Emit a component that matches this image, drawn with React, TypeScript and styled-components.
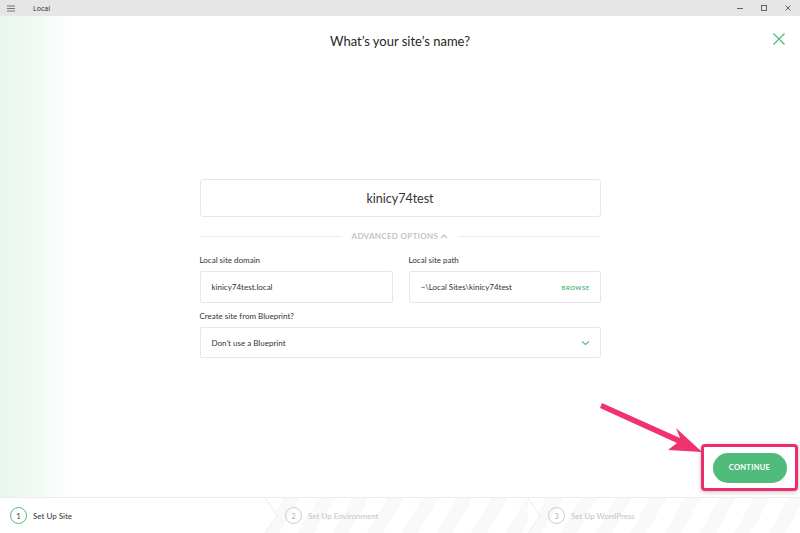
import React from "react";
import styled, { createGlobalStyle } from "styled-components";

const Global = createGlobalStyle`
    html, body {
        margin: 0;
        padding: 0;
        width: 800px;
        height: 533px;
        overflow: hidden;
        background: #ffffff;
        font-family: 'Lato', 'Open Sans', sans-serif;
    }
`

const Window = styled.div`
    position: relative;
    display: flex;
    flex-direction: column;
    width: 800px;
    height: 533px;
`

const TitleBar = styled.div`
    display: flex;
    align-items: center;
    height: 16px;
    background: #e6e6e6;
    font-size: 7px;
    color: #333;
    font-family: 'Noto Sans', sans-serif;
`

const Menu = styled.div`
    width: 33px;
    padding-left: 7px;
    box-sizing: border-box;
    display: flex;
    color: #555;
`

const WindowButtons = styled.div`
    margin-left: auto;
    display: flex;
    height: 100%;
`

const WinButton = styled.div`
    width: 24px;
    display: flex;
    align-items: center;
    justify-content: center;
    color: #444;
`

const Main = styled.div`
    position: relative;
    flex: 1;
    display: flex;
    flex-direction: column;
    align-items: center;
    background: linear-gradient(to right, #e9f6ed 0px, #f3faf5 40px, #ffffff 72px);
`

const Title = styled.h1`
    margin: 17px 0 0;
    font-size: 13px;
    line-height: 16px;
    font-weight: 400;
    color: #262626;
`

const Close = styled.button`
    position: absolute;
    top: 16px;
    right: 14px;
    background: none;
    border: none;
    padding: 0;
    width: 14px;
    height: 14px;
`

const Form = styled.div`
    width: 401px;
    margin-top: 130px;
    display: flex;
    flex-direction: column;
`

const NameBox = styled.div`
    height: 36px;
    border: 1px solid #e7e7e7;
    border-radius: 3px;
    display: flex;
    align-items: center;
    justify-content: center;
    font-size: 12.5px;
    color: #333;
`

const Divider = styled.div`
    display: flex;
    align-items: center;
    gap: 10px;
    margin-top: 14px;
    font-size: 8px;
    font-weight: 700;
    letter-spacing: 0.3px;
    color: #c4c4c4;

    &::before, &::after {
        content: "";
        flex: 1;
        height: 1px;
        background: #ececec;
    }
`

const Row = styled.div`
    display: grid;
    grid-template-columns: 193px 192px;
    justify-content: space-between;
    margin-top: 14px;
`

const Field = styled.div`
    display: flex;
    flex-direction: column;
`

const Label = styled.div<{ $top?: number }>`
    font-size: 8px;
    color: #333;
    margin-top: ${p => p.$top ?? 0}px;
    margin-bottom: 6px;
`

const Input = styled.div<{ $h?: number }>`
    height: ${p => p.$h ?? 30}px;
    border: 1px solid #e7e7e7;
    border-radius: 2px;
    display: flex;
    align-items: center;
    padding: 0 10px 0 11px;
    font-size: 8px;
    color: #333;
`

const Browse = styled.span`
    margin-left: auto;
    font-size: 6px;
    font-weight: 700;
    color: #51bb7b;
    letter-spacing: 0.4px;
`

const Footer = styled.div`
    height: 35px;
    border-top: 1px solid #ececec;
    display: grid;
    grid-template-columns: 265px 263px 1fr;
    background: #fff;
`

const Step = styled.div<{ $striped?: boolean }>`
    position: relative;
    display: flex;
    align-items: center;
    gap: 6px;
    padding-left: ${p => (p.$striped ? 20 : 10)}px;
    font-size: 8px;
    color: ${p => (p.$striped ? "#c4c4c4" : "#333")};
    background: ${p => p.$striped
        ? "repeating-linear-gradient(120deg, #ffffff 0 16px, #f9f9f9 16px 30px)"
        : "#fff"};
`

const StepNum = styled.div<{ $active?: boolean }>`
    width: 15px;
    height: 15px;
    border-radius: 50%;
    border: 1px solid ${p => (p.$active ? "#51bb7b" : "#cdcdcd")};
    display: flex;
    align-items: center;
    justify-content: center;
    font-size: 7px;
    color: ${p => (p.$active ? "#333" : "#b0b0b0")};
`

const Chevron = styled.svg`
    position: absolute;
    left: 0;
    top: 0;
    width: 14px;
    height: 35px;
`

const Highlight = styled.div`
    position: absolute;
    left: 701px;
    top: 444px;
    width: 91px;
    height: 41px;
    border: 3px solid #ec2d6a;
    border-radius: 4px;
    display: flex;
    align-items: center;
    justify-content: center;
    box-shadow: 0 1px 4px rgba(0, 0, 0, 0.25);
`

const ContinueButton = styled.button`
    width: 74px;
    height: 30px;
    border: none;
    border-radius: 15px;
    background: #51bb7b;
    color: #fff;
    font-family: 'Lato', sans-serif;
    font-size: 7.5px;
    font-weight: 700;
    letter-spacing: 0.3px;
`

const Arrow = styled.svg`
    position: absolute;
    left: 598px;
    top: 398px;
    width: 110px;
    height: 62px;
`

function StepChevron() {
    return (
        <Chevron viewBox="0 0 14 35">
            <polyline points="0,0 12,17.5 0,35" fill="#fff" stroke="#ececec" strokeWidth="1" />
        </Chevron>
    )
}

function App() {
    return (
        <Window>
            <Global />
            <TitleBar>
                <Menu>
                    <svg width="8" height="7" viewBox="0 0 8 7">
                        <path d="M0 1h8M0 3.5h8M0 6h8" stroke="#555" strokeWidth="0.8" />
                    </svg>
                </Menu>
                Local
                <WindowButtons>
                    <WinButton>
                        <svg width="8" height="8" viewBox="0 0 8 8"><path d="M1 4.5h6" stroke="#444" strokeWidth="0.8" /></svg>
                    </WinButton>
                    <WinButton>
                        <svg width="8" height="8" viewBox="0 0 8 8"><rect x="1.5" y="1.5" width="5" height="5" fill="none" stroke="#444" strokeWidth="0.8" /></svg>
                    </WinButton>
                    <WinButton>
                        <svg width="8" height="8" viewBox="0 0 8 8"><path d="M1.5 1.5l5 5M6.5 1.5l-5 5" stroke="#444" strokeWidth="0.8" /></svg>
                    </WinButton>
                </WindowButtons>
            </TitleBar>
            <Main>
                <Title>What’s your site’s name?</Title>
                <Close aria-label="close">
                    <svg width="14" height="14" viewBox="0 0 14 14">
                        <path d="M1.5 1.5l11 11M12.5 1.5l-11 11" stroke="#51bb7b" strokeWidth="1.3" />
                    </svg>
                </Close>
                <Form>
                    <NameBox>kinicy74test</NameBox>
                    <Divider>
                        <span>
                            ADVANCED OPTIONS{" "}
                            <svg width="8" height="5" viewBox="0 0 8 5">
                                <path d="M1 4l3-3 3 3" fill="none" stroke="#bbb" strokeWidth="1.1" />
                            </svg>
                        </span>
                    </Divider>
                    <Row>
                        <Field>
                            <Label>Local site domain</Label>
                            <Input>kinicy74test.local</Input>
                        </Field>
                        <Field>
                            <Label>Local site path</Label>
                            <Input>~\Local Sites\kinicy74test<Browse>BROWSE</Browse></Input>
                        </Field>
                    </Row>
                    <Label $top={8}>Create site from Blueprint?</Label>
                    <Input $h={29}>
                        Don’t use a Blueprint
                        <svg style={{ marginLeft: "auto" }} width="9" height="6" viewBox="0 0 9 6">
                            <path d="M1 1.5l3.5 3 3.5-3" fill="none" stroke="#51bb7b" strokeWidth="1.1" />
                        </svg>
                    </Input>
                </Form>
            </Main>
            <Footer>
                <Step>
                    <StepNum $active>1</StepNum>
                    Set Up Site
                </Step>
                <Step $striped>
                    <StepChevron />
                    <StepNum>2</StepNum>
                    Set Up Environment
                </Step>
                <Step $striped>
                    <StepChevron />
                    <StepNum>3</StepNum>
                    Set Up WordPress
                </Step>
            </Footer>
            <Arrow viewBox="0 0 110 62">
                <path d="M4 5 L82 40 L78 30 L104 54 L70 52 L79 45 L2 10 Z" fill="#f0336f" />
            </Arrow>
            <Highlight>
                <ContinueButton>CONTINUE</ContinueButton>
            </Highlight>
        </Window>
    );
}

export default App;
